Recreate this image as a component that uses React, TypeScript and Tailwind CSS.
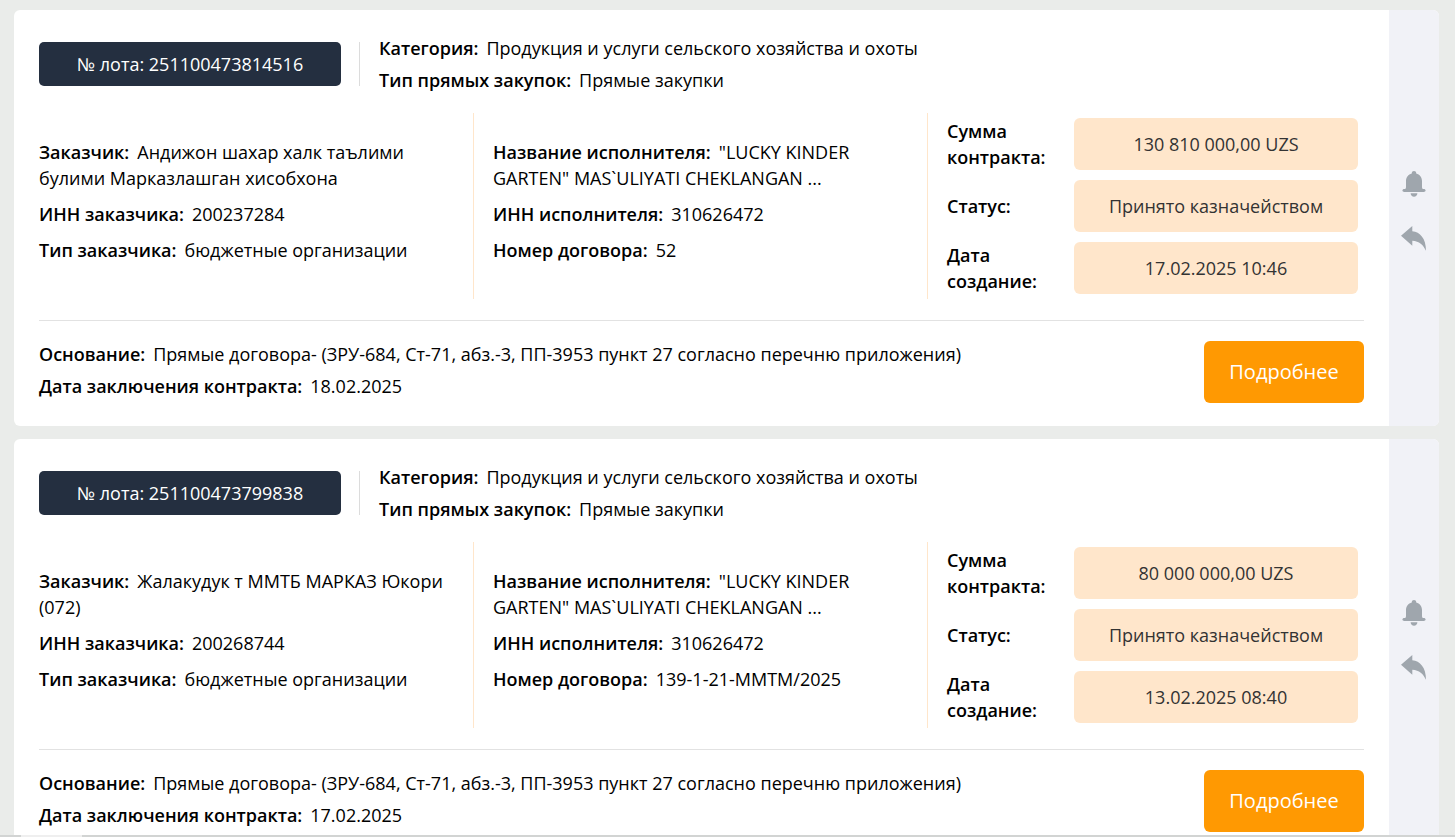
import type { ReactNode } from "react";

type Lot = {
  lot: string;
  customer: string;
  customerInn: string;
  contractNumber: string;
  amount: string;
  created: string;
  signed: string;
};

const lots: Lot[] = [
  {
    lot: "251100473814516",
    customer: "Андижон шахар халк таълими булими Марказлашган хисобхона",
    customerInn: "200237284",
    contractNumber: "52",
    amount: "130 810 000,00 UZS",
    created: "17.02.2025 10:46",
    signed: "18.02.2025",
  },
  {
    lot: "251100473799838",
    customer: "Жалакудук т ММТБ МАРКАЗ Юкори (072)",
    customerInn: "200268744",
    contractNumber: "139-1-21-ММТМ/2025",
    amount: "80 000 000,00 UZS",
    created: "13.02.2025 08:40",
    signed: "17.02.2025",
  },
];

function Field({ label, children }: { label: string; children: ReactNode }) {
  return (
    <p>
      <span className="mr-2 font-semibold">{label}</span>
      {children}
    </p>
  );
}

function Stat({ label, value }: { label: string; value: string }) {
  return (
    <div className="flex items-center justify-between">
      <dt className="w-[110px] font-semibold">{label}</dt>
      <dd className="flex h-[52px] w-[284px] items-center justify-center rounded-md bg-[#ffe6cb] text-[#333]">
        {value}
      </dd>
    </div>
  );
}

function BellIcon() {
  return (
    <svg viewBox="0 0 24 26" className="h-[26px] w-6" fill="currentColor" aria-hidden="true">
      <path d="M12 0c-1.300 0-2.200.9-2.200 2.100v.3C6.300 3.300 4 6.300 4 10v6.300c0 .8-.3 1.300-.8 1.700H2.300c-1.100 0-1.900.7-1.900 1.600S1.200 21 2.300 21h19.400c1.100 0 1.900-.5 1.900-1.400S22.800 18 21.700 18h-.9c-.5-.4-.8-.9-.8-1.700V10c0-3.700-2.300-6.700-5.800-7.600v-.3C14.200.9 13.300 0 12 0z" />
      <path d="M8.600 22.200h6.800c-.2 2.100-1.500 3.500-3.400 3.500s-3.200-1.400-3.400-3.500z" />
    </svg>
  );
}

function ReplyIcon() {
  return (
    <svg viewBox="0 0 26 25" className="h-[25px] w-[26px]" fill="currentColor" aria-hidden="true">
      <path d="M0 9.800 11.300 0v5.300C19 6 25 12.500 25 24.800 22.200 18.500 18.400 15.200 11.300 14.700v5.100z" />
    </svg>
  );
}

function LotCard({ item }: { item: Lot }) {
  return (
    <article className="flex overflow-hidden rounded-md bg-white">
      <div className="min-w-0 flex-1 px-[25px] pt-[25px] pb-[23px]">
        <header className="flex items-center">
          <div className="flex h-11 w-[302px] items-center justify-center rounded-[5px] bg-[#242f40] text-white">
            № лота: {item.lot}
          </div>
          <div className="ml-[18px] h-11 w-px bg-[#dcdcdc]" />
          <div className="ml-[19px] space-y-[6px]">
            <Field label="Категория:">Продукция и услуги сельского хозяйства и охоты</Field>
            <Field label="Тип прямых закупок:">Прямые закупки</Field>
          </div>
        </header>
        <div className="mt-5 grid grid-cols-[435fr_454fr_436fr]">
          <div className="space-y-[10px] border-r border-[#ffe6cb] pt-[26px] pr-5">
            <Field label="Заказчик:">{item.customer}</Field>
            <Field label="ИНН заказчика:">{item.customerInn}</Field>
            <Field label="Тип заказчика:">бюджетные организации</Field>
          </div>
          <div className="space-y-[10px] border-r border-[#ffe6cb] px-[19px] pt-[26px]">
            <Field label="Название исполнителя:">"LUCKY KINDER GARTEN" MAS`ULIYATI CHEKLANGAN ...</Field>
            <Field label="ИНН исполнителя:">310626472</Field>
            <Field label="Номер договора:">{item.contractNumber}</Field>
          </div>
          <dl className="space-y-[10px] py-[5px] pr-[6px] pl-[19px]">
            <Stat label="Сумма контракта:" value={item.amount} />
            <Stat label="Статус:" value="Принято казначейством" />
            <Stat label="Дата создание:" value={item.created} />
          </dl>
        </div>
        <footer className="mt-[21px] flex justify-between border-t border-[#e2e2e2] pt-5">
          <div className="space-y-[6px]">
            <Field label="Основание:">
              Прямые договора- (ЗРУ-684, Ст-71, абз.-3, ПП-3953 пункт 27 согласно перечню приложения)
            </Field>
            <Field label="Дата заключения контракта:">{item.signed}</Field>
          </div>
          <button type="button" className="h-[62px] w-40 rounded-md bg-[#ff9902] text-[20px] text-white">
            Подробнее
          </button>
        </footer>
      </div>
      <aside className="flex w-[50px] shrink-0 flex-col items-center justify-center gap-[29px] bg-[#f1f2f7] pb-[14px] text-[#9fa6ad]">
        <button type="button" aria-label="Уведомления"><BellIcon /></button>
        <button type="button" aria-label="Назад"><ReplyIcon /></button>
      </aside>
    </article>
  );
}

export default function App() {
  return (
    <main className="h-screen overflow-hidden bg-[#eaecea] font-['Open_Sans',sans-serif] text-[18px] leading-[26px] text-black">
      <div className="space-y-[13px] pt-[10px] pr-4 pl-[14px]">
        {lots.map((item) => (
          <LotCard key={item.lot} item={item} />
        ))}
      </div>
      <div className="fixed inset-x-0 bottom-0 h-[2px] bg-[#d2d4d3]">
        <div className="ml-[21px] h-full w-[61px] bg-[#efefef]" />
      </div>
    </main>
  );
}
